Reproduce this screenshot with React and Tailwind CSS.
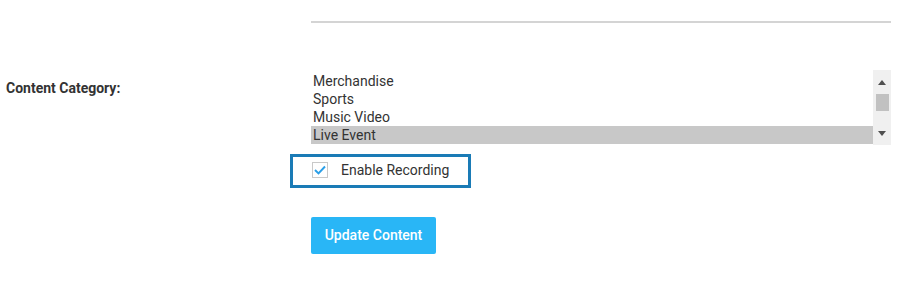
export default function App() {
    const options = ["Merchandise", "Sports", "Music Video", "Live Event"];

    return (
        <div className="w-[911px] h-[289px] bg-white text-[#333] font-['Roboto',sans-serif] text-[14px]">
            <div className="flex pt-[21px]">
                <div className="w-[311px]" />
                <div className="w-[580px] border-t-2 border-[#d4d4d4]" />
            </div>

            <div className="flex mt-[47px]">
                <div className="w-[311px] pl-[6px] pt-[8px] font-bold">Content Category:</div>
                <div className="w-[580px] h-[75px] flex">
                    <div className="flex-1 flex flex-col justify-end pb-[1px]">
                        {options.map((o) => (
                            <div key={o} className={"h-[18px] leading-[18px] pl-[2px] " + (o === "Live Event" ? "bg-[#c8c8c8]" : "")}>
                                {o}
                            </div>
                        ))}
                    </div>
                    <div className="w-[18px] bg-[#f0f0f0] flex flex-col items-center">
                        <svg width="8" height="5" viewBox="0 0 8 5" className="mt-[10px]">
                            <path d="M0 5 L4 0 L8 5 Z" fill="#505050" />
                        </svg>
                        <div className="w-[13px] h-[17px] bg-[#c1c1c1] mt-[9px]" />
                        <div className="flex-1" />
                        <svg width="8" height="5" viewBox="0 0 8 5" className="mb-[9px]">
                            <path d="M0 0 L8 0 L4 5 Z" fill="#505050" />
                        </svg>
                    </div>
                </div>
            </div>

            <div className="pl-[290px] mt-[9px]">
                <div className="w-[181px] h-[34px] border-[3px] border-[#1a7bb6] flex items-center pl-[19px]">
                    <div className="w-[16px] h-[16px] border border-[#c9c9c9] flex items-center justify-center -mt-[2px]">
                        <svg width="12" height="10" viewBox="0 0 12 10">
                            <path d="M1 5 L4.5 8.5 L11 1.5" fill="none" stroke="#2a9fe8" strokeWidth="1.9" />
                        </svg>
                    </div>
                    <span className="ml-[13px] text-[14px] -mt-[2px]">Enable Recording</span>
                </div>
            </div>

            <div className="pl-[311px] mt-[29px]">
                <button className="w-[125px] h-[37px] bg-[#29b6f6] text-white rounded-[2px] font-medium text-[14px]">
                    Update Content
                </button>
            </div>
        </div>
    );
}
